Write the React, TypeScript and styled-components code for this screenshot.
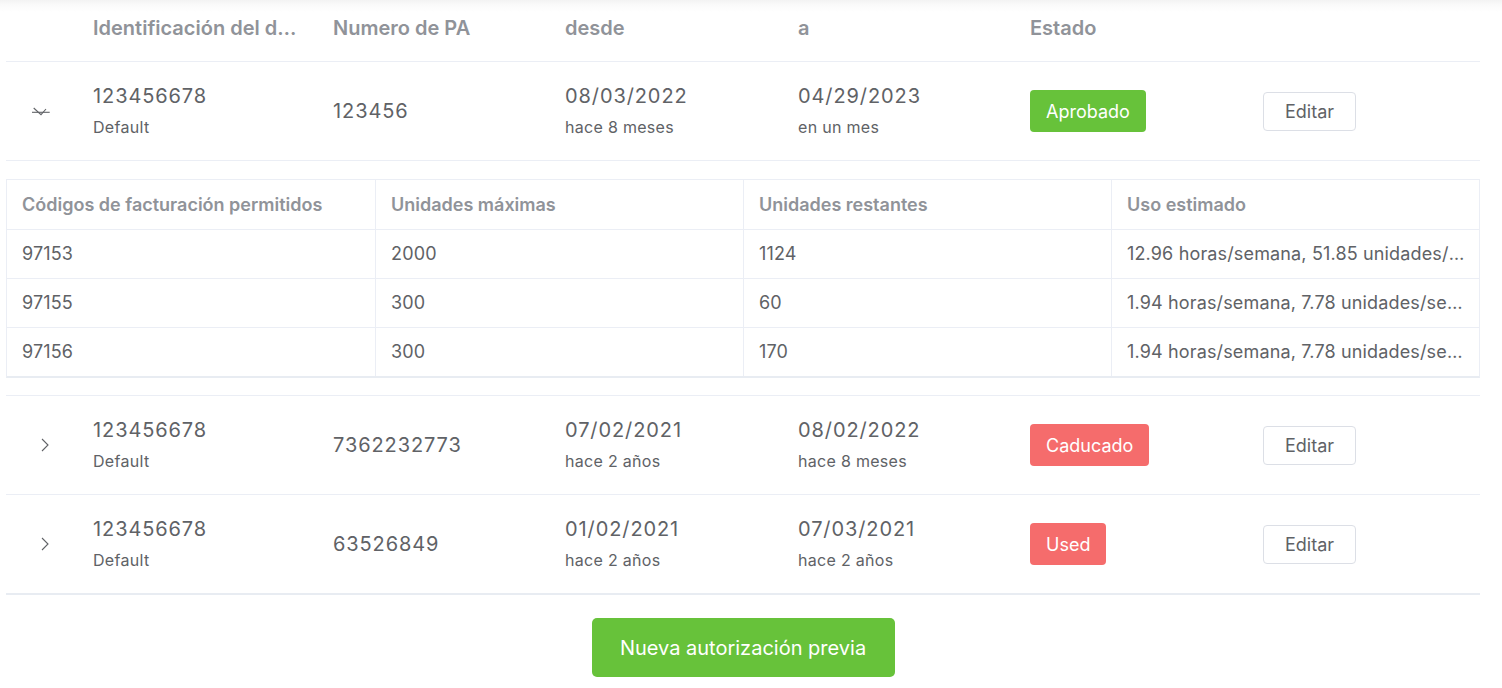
import React from "react";
import styled, { createGlobalStyle } from "styled-components";

const GlobalStyle = createGlobalStyle`
  html, body { margin: 0; padding: 0; background: #fff; }
  body { font-family: Inter, "Noto Sans", sans-serif; color: #606266; }
  * { box-sizing: border-box; }
`;

const Page = styled.div`
  width: 1502px;
  height: 688px;
  overflow: hidden;
  padding: 0 22px 0 6px;
  background: linear-gradient(#f3f3f3 0px, #fafafa 5px, #ffffff 12px);
`;

const COLS = "75px 240px 232px 233px 232px 233px 1fr";

const HeaderRow = styled.div`
  display: grid;
  grid-template-columns: ${COLS};
  height: 62px;
  align-items: center;
  padding-bottom: 5px;
  border-bottom: 1px solid #ebeef5;
`;

const HeadCell = styled.div<{ $wide?: boolean }>`
  padding: 0 ${(p) => (p.$wide ? "20px" : "12px")} 0 12px;
  font-size: 20px;
  font-weight: 600;
  color: #909399;
  white-space: nowrap;
  overflow: hidden;
  text-overflow: ellipsis;
`;

const Row = styled.div<{ $last?: boolean }>`
  display: grid;
  grid-template-columns: ${COLS};
  height: ${(p) => (p.$last ? "100px" : "99px")};
  align-items: center;
  border-bottom: ${(p) => (p.$last ? "2px solid #e8ecf2" : "1px solid #ebeef5")};
`;

const IconCell = styled.div`
  display: flex;
  justify-content: center;
  align-items: center;
`;

const Cell = styled.div`
  padding: 0 12px;
  display: flex;
  flex-direction: column;
  justify-content: center;
`;

const Main = styled.div`
  font-size: 20px;
  line-height: 24px;
  color: #606266;
  letter-spacing: 0.9px;
`;

const Sub = styled.div`
  font-size: 16px;
  line-height: 24px;
  margin-top: 7px;
  color: #606266;
  letter-spacing: 0.3px;
`;

const Badge = styled.span<{ $tone: "success" | "danger" }>`
  display: inline-flex;
  align-items: center;
  align-self: flex-start;
  height: 42px;
  padding: 0 16px;
  border-radius: 4px;
  font-size: 18px;
  color: #fff;
  background: ${(p) => (p.$tone === "success" ? "#67c23a" : "#f56c6c")};
`;

const EditButton = styled.button`
  align-self: flex-start;
  height: 39px;
  padding: 0 21px;
  font-family: inherit;
  font-size: 18px;
  color: #606266;
  background: #fff;
  border: 1px solid #dcdfe6;
  border-radius: 4px;
  cursor: pointer;
`;

const Expanded = styled.div`
  padding: 18px 0 17px;
  border-bottom: 1px solid #ebeef5;
`;

const SubTable = styled.div`
  display: grid;
  grid-template-columns: repeat(4, 1fr);
  border: 1px solid #ebeef5;
  border-bottom: 2px solid #e8ecf2;
`;

const SubHead = styled.div`
  height: 50px;
  display: flex;
  align-items: center;
  padding: 0 16px 0 15px;
  font-size: 18px;
  font-weight: 600;
  color: #909399;
  border-bottom: 1px solid #ebeef5;
  border-left: 1px solid #ebeef5;
  white-space: nowrap;
  overflow: hidden;
  &:nth-child(4n + 1) { border-left: none; }
`;

const SubCell = styled.div<{ $lastRow?: boolean }>`
  height: ${(p) => (p.$lastRow ? "48px" : "49px")};
  line-height: 48px;
  padding: 0 14px 0 15px;
  font-size: 18px;
  color: #606266;
  letter-spacing: 0.15px;
  border-bottom: ${(p) => (p.$lastRow ? "none" : "1px solid #ebeef5")};
  border-left: 1px solid #ebeef5;
  white-space: nowrap;
  overflow: hidden;
  text-overflow: ellipsis;
  &:nth-child(4n + 1) { border-left: none; }
`;

const Footer = styled.div`
  display: flex;
  justify-content: center;
  padding-top: 23px;
`;

const PrimaryButton = styled.button`
  width: 303px;
  height: 59px;
  border: none;
  border-radius: 5px;
  background: #67c23a;
  color: #fff;
  font-family: inherit;
  font-size: 20px;
  cursor: pointer;
`;

const ChevronRight = () => (
  <svg width="10" height="16" viewBox="0 0 10 16" style={{ marginLeft: 2 }}>
    <polyline points="2,2 8,8 2,14" fill="none" stroke="#606266" strokeWidth="1.1" />
  </svg>
);

const ChevronOpen = () => (
  <svg width="20" height="12" viewBox="0 0 20 12" style={{ marginLeft: -6 }}>
    <polyline points="2.7,3 10,9.7 15,4" fill="none" stroke="#606266" strokeWidth="1.1" />
    <line x1="1" y1="7.3" x2="18.7" y2="7.3" stroke="#606266" strokeWidth="1.1" />
  </svg>
);

type RowData = {
  id: string;
  pa: string;
  from: string;
  fromRel: string;
  to: string;
  toRel: string;
  status: string;
  tone: "success" | "danger";
  open?: boolean;
};

const rows: RowData[] = [
  { id: "123456678", pa: "123456", from: "08/03/2022", fromRel: "hace 8 meses", to: "04/29/2023", toRel: "en un mes", status: "Aprobado", tone: "success", open: true },
  { id: "123456678", pa: "7362232773", from: "07/02/2021", fromRel: "hace 2 años", to: "08/02/2022", toRel: "hace 8 meses", status: "Caducado", tone: "danger" },
  { id: "123456678", pa: "63526849", from: "01/02/2021", fromRel: "hace 2 años", to: "07/03/2021", toRel: "hace 2 años", status: "Used", tone: "danger" },
];

const codes = [
  ["97153", "2000", "1124", "12.96 horas/semana, 51.85 unidades/semana"],
  ["97155", "300", "60", "1.94 horas/semana, 7.78 unidades/semana"],
  ["97156", "300", "170", "1.94 horas/semana, 7.78 unidades/semana"],
];

export default function App() {
  return (
    <>
      <GlobalStyle />
      <Page>
        <HeaderRow>
          <HeadCell />
          <HeadCell $wide>Identificación del dispositivo</HeadCell>
          <HeadCell>Numero de PA</HeadCell>
          <HeadCell>desde</HeadCell>
          <HeadCell>a</HeadCell>
          <HeadCell>Estado</HeadCell>
          <HeadCell />
        </HeaderRow>
        {rows.map((r, i) => (
          <React.Fragment key={i}>
            <Row $last={i === rows.length - 1}>
              <IconCell>{r.open ? <ChevronOpen /> : <ChevronRight />}</IconCell>
              <Cell>
                <Main>{r.id}</Main>
                <Sub>Default</Sub>
              </Cell>
              <Cell>
                <Main>{r.pa}</Main>
              </Cell>
              <Cell>
                <Main>{r.from}</Main>
                <Sub>{r.fromRel}</Sub>
              </Cell>
              <Cell>
                <Main>{r.to}</Main>
                <Sub>{r.toRel}</Sub>
              </Cell>
              <Cell>
                <Badge $tone={r.tone}>{r.status}</Badge>
              </Cell>
              <Cell>
                <EditButton>Editar</EditButton>
              </Cell>
            </Row>
            {r.open && (
              <Expanded>
                <SubTable>
                  <SubHead>Códigos de facturación permitidos</SubHead>
                  <SubHead>Unidades máximas</SubHead>
                  <SubHead>Unidades restantes</SubHead>
                  <SubHead>Uso estimado</SubHead>
                  {codes.map((c, ri) =>
                    c.map((v, ci) => (
                      <SubCell key={`${ri}-${ci}`} $lastRow={ri === codes.length - 1}>
                        {v}
                      </SubCell>
                    ))
                  )}
                </SubTable>
              </Expanded>
            )}
          </React.Fragment>
        ))}
        <Footer>
          <PrimaryButton>Nueva autorización previa</PrimaryButton>
        </Footer>
      </Page>
    </>
  );
}
